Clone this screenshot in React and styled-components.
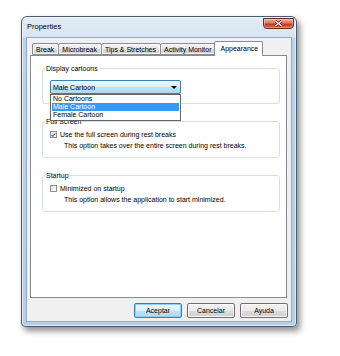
import React from "react";
import styled, { createGlobalStyle } from "styled-components";

const GlobalStyle = createGlobalStyle`
  html, body {
    margin: 0;
    background: #ffffff;
  }
  body {
    font-family: "Liberation Sans", Arial, sans-serif;
    font-size: 7px;
    color: #000;
  }
`;

const Page = styled.div`
  padding: 16px 0 0 21px;
  height: 356px;
  box-sizing: border-box;
`;

const Window = styled.div`
  width: 276px;
  height: 311px;
  box-sizing: border-box;
  border: 1px solid #4b5b70;
  border-radius: 6px 6px 4px 4px;
  background: linear-gradient(
    to bottom,
    #e4edf7 0px,
    #d6e3f1 20px,
    #bad2ea 21px,
    #b5cee9 100%
  );
  box-shadow: 3px 4px 6px rgba(0, 0, 0, 0.45),
    inset 0 0 0 1px rgba(255, 255, 255, 0.55);
  padding: 0 4px 4px 4px;
  display: flex;
  flex-direction: column;
`;

const TitleBar = styled.div`
  height: 20px;
  display: flex;
  align-items: flex-start;
  padding-left: 1px;
`;

const Title = styled.div`
  margin-top: 5px;
  line-height: 10px;
  font-size: 7.5px;
  color: #000;
`;

const CloseButton = styled.div`
  margin-left: auto;
  margin-right: -2px;
  margin-top: 1px;
  width: 31px;
  height: 11px;
  box-sizing: border-box;
  border: 1px solid #6e2619;
  border-radius: 0 0 4px 4px;
  background: linear-gradient(
    to bottom,
    #e9a99b 0%,
    #dc7a66 45%,
    #c23b22 55%,
    #d3634b 100%
  );
  box-shadow: inset 0 0 0 1px rgba(255, 255, 255, 0.35);
  display: flex;
  align-items: center;
  justify-content: center;
`;

const Client = styled.div`
  flex: 1;
  background: #f0f0f0;
  border: 1px solid #97aac2;
  display: flex;
  flex-direction: column;
  padding: 0 4px 3px 3px;
  min-height: 0;
`;

const TabStrip = styled.div`
  height: 17px;
  display: flex;
  align-items: flex-end;
  padding-left: 2px;
  position: relative;
  z-index: 1;
`;

const Tab = styled.div`
  height: ${({ $active }) => ($active ? "15px" : "12px")};
  margin: ${({ $active }) => ($active ? "0 0 -1px -2px" : "0 0 0 -1px")};
  box-sizing: border-box;
  border: 1px solid #898c95;
  border-bottom: ${({ $active }) =>
    $active ? "none" : "1px solid #898c95"};
  border-radius: 2px 2px 0 0;
  padding: ${({ $active }) => ($active ? "2px 4px 0 5px" : "1px 4px 0 3px")};
  background: ${({ $active }) =>
    $active
      ? "#ffffff"
      : "linear-gradient(to bottom, #f2f2f2 0%, #ebebeb 50%, #dddddd 51%, #cfcfcf 100%)"};
  box-shadow: ${({ $active }) =>
    $active ? "none" : "inset 0 0 0 1px rgba(255,255,255,0.7)"};
  line-height: 9px;
  white-space: nowrap;
  &:first-child {
    margin-left: 0;
  }
`;

const Panel = styled.div`
  flex: 1;
  background: #ffffff;
  border: 1px solid #898c95;
  padding: 8px 6px 0 11px;
  display: flex;
  flex-direction: column;
  gap: 13px;
`;

const Group = styled.fieldset`
  margin: 0;
  padding: ${({ $pad }) => $pad};
  border: 1px solid #d5dfe5;
  border-radius: 3px;
  min-width: 0;
  position: relative;
`;

const Legend = styled.legend`
  padding: 0 1px;
  margin-left: -5px;
  line-height: 9px;
  color: #000;
`;

const ComboWrap = styled.div`
  position: relative;
  width: 131px;
  z-index: 2;
`;

const Combo = styled.div`
  height: 14px;
  box-sizing: border-box;
  border: 1px solid #3c7fb1;
  border-radius: 2px;
  background: linear-gradient(
    to bottom,
    #eaf6fd 0%,
    #d9f0fc 50%,
    #bee6fd 51%,
    #a7d9f5 100%
  );
  display: flex;
  align-items: center;
  padding: 0 3px 0 2px;
  line-height: 9px;
`;

const Arrow = styled.span`
  margin-left: auto;
  width: 0;
  height: 0;
  border-left: 3px solid transparent;
  border-right: 3px solid transparent;
  border-top: 3px solid #000;
`;

const DropList = styled.div`
  position: absolute;
  top: 100%;
  left: 0;
  width: 131px;
  box-sizing: border-box;
  border: 1px solid #646464;
  background: #ffffff;
  padding: 0 1px 1px;
`;

const Option = styled.div`
  height: 8px;
  line-height: 8px;
  padding-left: 1px;
  background: ${({ $selected }) => ($selected ? "#3399ff" : "transparent")};
  color: ${({ $selected }) => ($selected ? "#ffffff" : "#000")};
`;

const CheckRow = styled.div`
  display: flex;
  align-items: center;
  gap: 3px;
  line-height: 9px;
`;

const Box = styled.span`
  width: 7px;
  height: 7px;
  box-sizing: border-box;
  border: 1px solid #8e8f8f;
  background: linear-gradient(135deg, #dcdcdc 0%, #f4f4f4 60%, #ffffff 100%);
  display: flex;
  align-items: center;
  justify-content: center;
`;

const Desc = styled.div`
  margin-top: 2px;
  padding-left: 14px;
  line-height: 9px;
`;

const ButtonRow = styled.div`
  display: flex;
  justify-content: flex-end;
  gap: 5px;
  margin-top: 5px;
  margin-right: -1px;
`;

const Button = styled.div`
  width: 48px;
  height: 15px;
  box-sizing: border-box;
  border: 1px solid ${({ $default }) => ($default ? "#3c7fb1" : "#707070")};
  border-radius: 2px;
  background: ${({ $default }) =>
    $default
      ? "linear-gradient(to bottom, #eaf6fd 0%, #d9f0fc 50%, #bee6fd 51%, #a7d9f5 100%)"
      : "linear-gradient(to bottom, #f2f2f2 0%, #ebebeb 50%, #dddddd 51%, #cfcfcf 100%)"};
  box-shadow: inset 0 0 0 1px
    ${({ $default }) => ($default ? "#90d0f5" : "rgba(255,255,255,0.8)")};
  display: flex;
  align-items: center;
  justify-content: center;
  line-height: 9px;
`;

const Check = () => (
  <svg width="6" height="6" viewBox="0 0 6 6">
    <path d="M0.8 3 L2.4 4.7 L5.3 0.9" fill="none" stroke="#4a5f97" strokeWidth="1.3" />
  </svg>
);

const CloseX = () => (
  <svg width="9" height="7" viewBox="0 0 9 7">
    <path d="M1.5 1 L7.5 6 M7.5 1 L1.5 6" stroke="#5a1a10" strokeWidth="2.6" />
    <path d="M1.5 1 L7.5 6 M7.5 1 L1.5 6" stroke="#ffffff" strokeWidth="1.4" />
  </svg>
);

const tabs = ["Break", "Microbreak", "Tips & Stretches", "Activity Monitor", "Appearance"];
const options = ["No Cartoons", "Male Cartoon", "Female Cartoon"];

const App = () => {
  return (
    <Page>
      <GlobalStyle />
      <Window>
        <TitleBar>
          <Title>Properties</Title>
          <CloseButton>
            <CloseX />
          </CloseButton>
        </TitleBar>
        <Client>
          <TabStrip>
            {tabs.map((t) => (
              <Tab key={t} $active={t === "Appearance"}>
                {t}
              </Tab>
            ))}
          </TabStrip>
          <Panel>
            <Group $pad="7px 7px 9px 7px">
              <Legend>Display cartoons</Legend>
              <ComboWrap>
                <Combo>
                  Male Cartoon
                  <Arrow />
                </Combo>
                <DropList>
                  {options.map((o) => (
                    <Option key={o} $selected={o === "Male Cartoon"}>
                      {o}
                    </Option>
                  ))}
                </DropList>
              </ComboWrap>
            </Group>
            <Group $pad="4px 7px 7px 7px">
              <Legend>Full Screen</Legend>
              <CheckRow>
                <Box>
                  <Check />
                </Box>
                Use the full screen during rest breaks
              </CheckRow>
              <Desc>This option takes over the entire screen during rest breaks.</Desc>
            </Group>
            <Group $pad="4px 7px 7px 7px">
              <Legend>Startup</Legend>
              <CheckRow>
                <Box />
                Minimized on startup
              </CheckRow>
              <Desc>This option allows the application to start minimized.</Desc>
            </Group>
          </Panel>
          <ButtonRow>
            <Button $default>Aceptar</Button>
            <Button>Cancelar</Button>
            <Button>Ayuda</Button>
          </ButtonRow>
        </Client>
      </Window>
    </Page>
  );
};

export default App;
